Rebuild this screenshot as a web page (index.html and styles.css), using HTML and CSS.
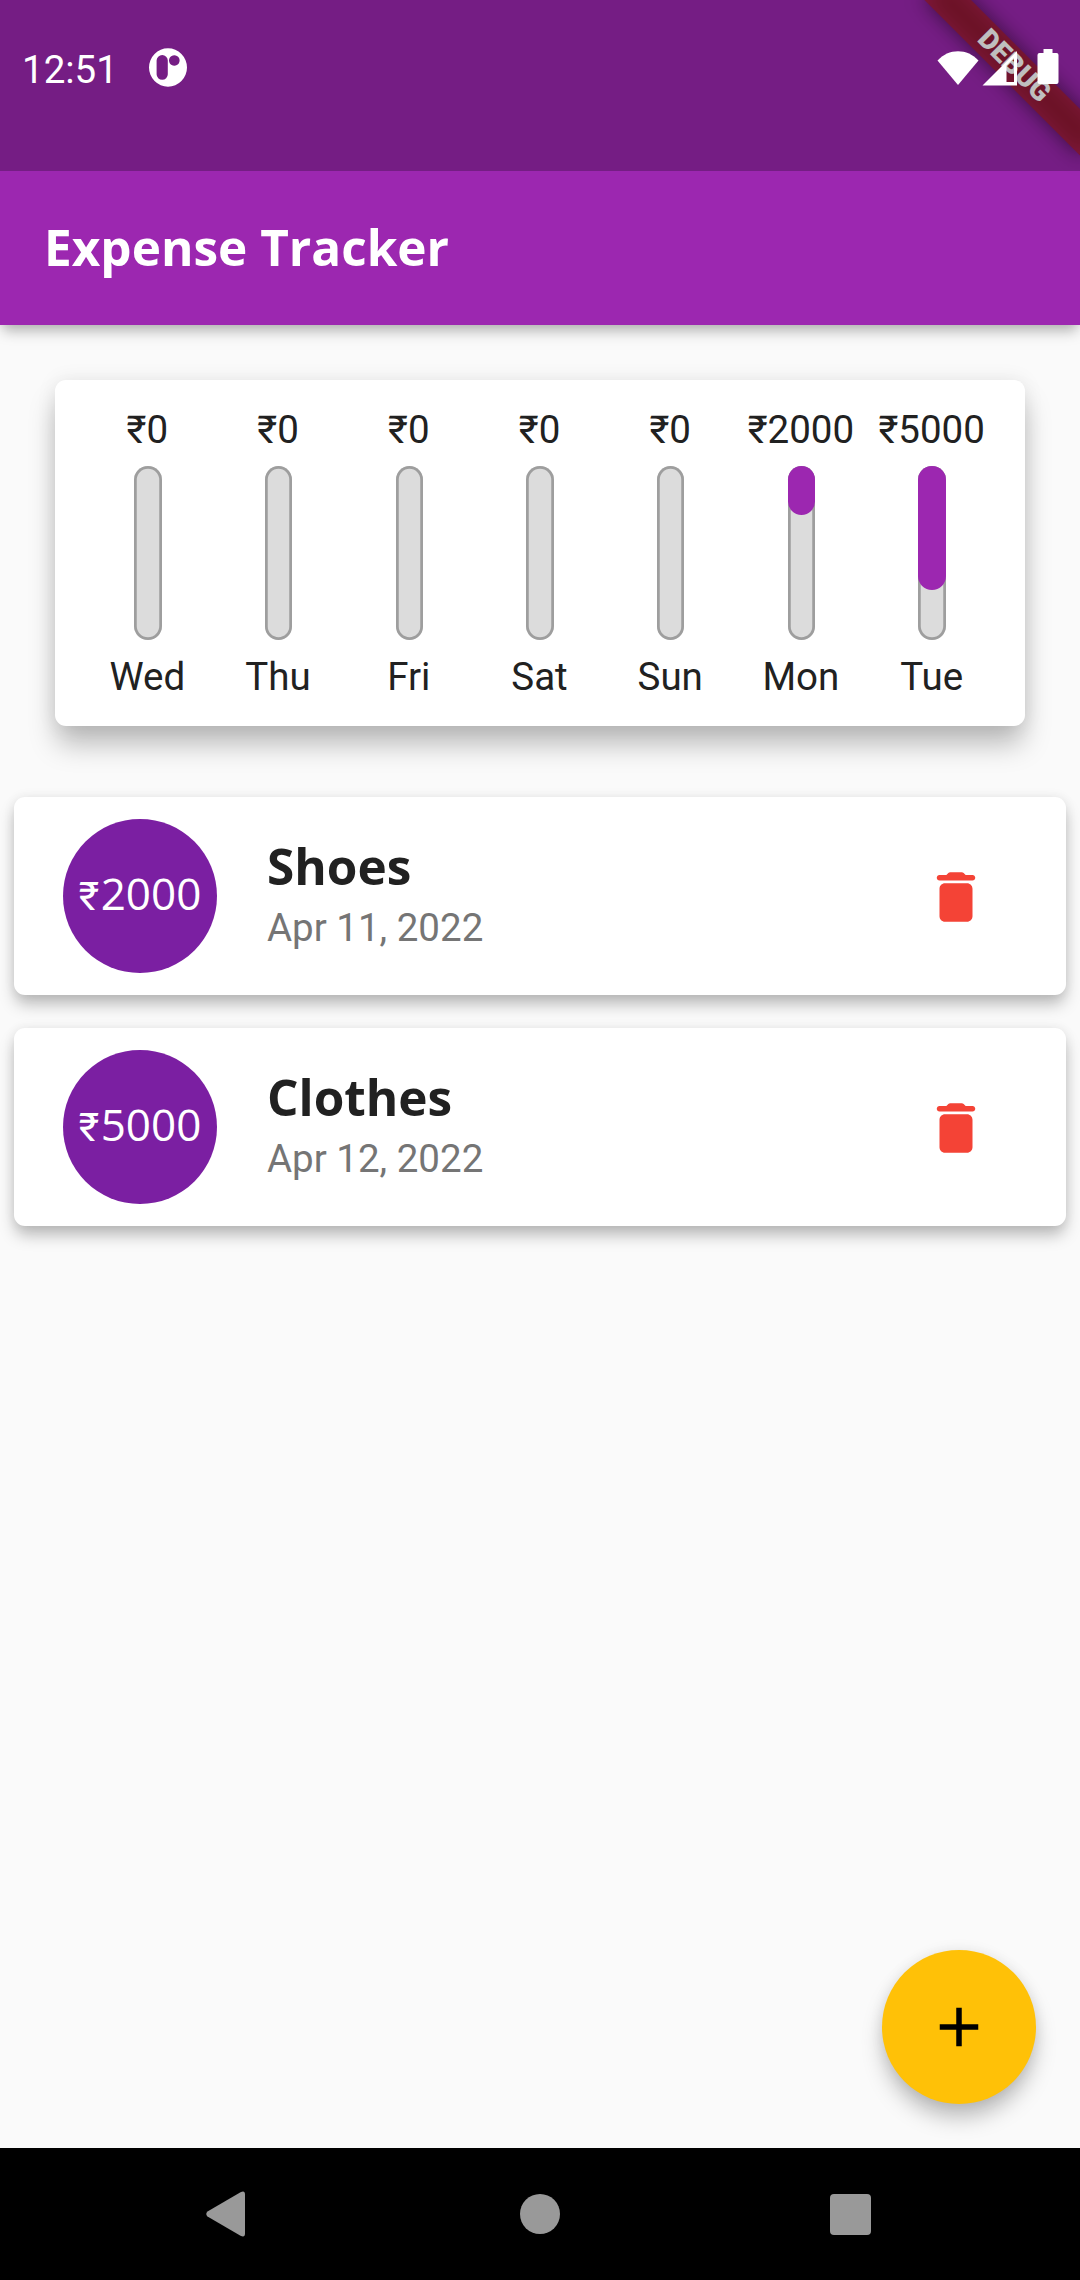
FILE: index.html
```html
<!DOCTYPE html>
<html lang="en">
<head>
<meta charset="utf-8">
<title>Expense Tracker</title>
<link rel="stylesheet" href="styles.css">
</head>
<body>
<div class="app">
  <div class="banner-clip"><div class="banner">DEBUG</div></div>
  <header class="status">
    <div class="status-left">
      <span class="clock">12:51</span>
      <svg class="notif" width="38" height="39" viewBox="0 0 38 39"><path fill="#fff" fill-rule="evenodd" d="M19 .3a19 19.200 0 1 1 0 38.400a19 19.200 0 0 1 0-38.400zM13.200 7a5.600 5.600 0 0 0-5.600 5.600v13.600a5.600 5.600 0 0 0 11.200 0v-13.600a5.600 5.600 0 0 0-5.600-5.600zM25.300 7.200a5.300 5.300 0 1 0 .01 0z"/></svg>
    </div>
    <div class="status-right">
      <svg width="42" height="36" viewBox="0 0 42 36"><path fill="#fff" d="M.5 10.500C11.500-2 30.500-2 41.500 10.500L21 35z"/></svg>
      <svg class="signal" width="36" height="36" viewBox="0 0 36 36"><path fill="#fff" fill-rule="evenodd" d="M.5 35.500L35 1v34.500zM24.500 15.500v16.500h7.500v-24z"/></svg>
      <svg class="battery" width="22" height="36" viewBox="0 0 22 36"><path fill="#fff" d="M6.500 0h9v4h4a2 2 0 0 1 2 2v27a2 2 0 0 1-2 2h-17a2 2 0 0 1-2-2v-27a2 2 0 0 1 2-2h4z"/></svg>
    </div>
  </header>
  <div class="appbar"><h1>Expense Tracker</h1></div>
  <main>
    <section class="chart">
      <div class="day"><span>₹0</span><div class="bar"></div><span>Wed</span></div>
      <div class="day"><span>₹0</span><div class="bar"></div><span>Thu</span></div>
      <div class="day"><span>₹0</span><div class="bar"></div><span>Fri</span></div>
      <div class="day"><span>₹0</span><div class="bar"></div><span>Sat</span></div>
      <div class="day"><span>₹0</span><div class="bar"></div><span>Sun</span></div>
      <div class="day"><span>₹2000</span><div class="bar"><div class="fill" style="height:28.571%"></div></div><span>Mon</span></div>
      <div class="day"><span>₹5000</span><div class="bar"><div class="fill" style="height:71.429%"></div></div><span>Tue</span></div>
    </section>
    <section class="list">
      <article class="item">
        <div class="amount"><span class="cur">₹</span>2000</div>
        <div class="info"><h2>Shoes</h2><p>Apr 11, 2022</p></div>
        <svg class="trash" viewBox="0 0 24 24"><path d="M6 19c0 1.100.9 2 2 2h8c1.100 0 2-.9 2-2V9c0-1.100-.9-2-2-2H8c-1.100 0-2 .9-2 2v10zM18 4h-2.500l-.71-.71c-.18-.18-.44-.29-.7-.29H9.910c-.26 0-.52.11-.7.29L8.500 4H6c-.55 0-1 .45-1 1s.45 1 1 1h12c.55 0 1-.45 1-1s-.45-1-1-1z"/></svg>
      </article>
      <article class="item">
        <div class="amount"><span class="cur">₹</span>5000</div>
        <div class="info"><h2>Clothes</h2><p>Apr 12, 2022</p></div>
        <svg class="trash" viewBox="0 0 24 24"><path d="M6 19c0 1.100.9 2 2 2h8c1.100 0 2-.9 2-2V9c0-1.100-.9-2-2-2H8c-1.100 0-2 .9-2 2v10zM18 4h-2.500l-.71-.71c-.18-.18-.44-.29-.7-.29H9.910c-.26 0-.52.11-.7.29L8.500 4H6c-.55 0-1 .45-1 1s.45 1 1 1h12c.55 0 1-.45 1-1s-.45-1-1-1z"/></svg>
      </article>
    </section>
    <button class="fab" aria-label="Add"><svg viewBox="0 0 24 24"><path d="M19 13h-6v6h-2v-6H5v-2h6V5h2v6h6z"/></svg></button>
  </main>
  <nav class="nav">
    <svg width="40" height="46" viewBox="0 0 40 46"><path d="M34.500 1.200Q39 -1 39 3.500V42.500Q39 47 34.500 44.800L1.500 25.500Q-1 23 1.500 20.500z"/></svg>
    <svg class="home" width="40" height="40" viewBox="0 0 40 40"><circle cx="20" cy="20" r="20"/></svg>
    <svg width="41" height="41" viewBox="0 0 41 41"><rect width="41" height="41" rx="4"/></svg>
  </nav>
</div>
</body>
</html>
```
FILE: styles.css
```css
* { box-sizing: border-box; margin: 0; padding: 0; }
body { background: #fafafa; font-family: Roboto, sans-serif; }
.app {
  position: relative;
  width: 1080px;
  height: 2280px;
  display: flex;
  flex-direction: column;
  overflow: hidden;
}

.status {
  position: relative;
  z-index: 4;
  flex: none;
  height: 171px;
  padding: 48px 21px 0 22px;
  display: flex;
  justify-content: space-between;
  align-items: flex-start;
  background: rgba(0, 0, 0, .25);
  color: #fff;
}
.status-left, .status-right { display: flex; align-items: flex-start; }
.clock { font-size: 38.5px; line-height: 44px; width: 127px; }
.status-right { padding-top: 2px; }
.signal { margin-left: 3px; }
.battery { margin-left: 19px; margin-top: -1px; }

/* corner ribbon, painted beneath the translucent status bar */
.banner-clip {
  position: absolute;
  z-index: 3;
  top: 0;
  right: 0;
  width: 300px;
  height: 300px;
  overflow: hidden;
}
.banner {
  position: absolute;
  left: 190px;
  top: 77px;
  width: 220px;
  height: 33px;
  transform-origin: 110px -77px;
  transform: rotate(45deg);
  color: #fff;
  font-size: 28px;
  font-weight: 900;
  line-height: 32px;
  text-align: center;
}
.banner::before, .banner::after {
  content: "";
  position: absolute;
  inset: 0;
  z-index: -1;
}
.banner::before { background: rgba(0, 0, 0, .5); filter: blur(10px); z-index: -2; }
.banner::after { background: rgba(183, 28, 28, .627); }

.appbar {
  position: relative;
  z-index: 2;
  flex: none;
  height: 325px;
  margin-top: -171px;
  padding: 171px 44px 2px;
  display: flex;
  align-items: center;
  background: #9c27b0;
  box-shadow: 0 9px 13px -3px rgba(0, 0, 0, .28), 0 0 10px rgba(0, 0, 0, .06);
}
h1, h2 {
  font-family: "Open Sans", sans-serif;
  font-weight: 700;
  font-size: 49.5px;
  line-height: 68px;
}
h1 { color: #fff; }
h2 { color: #212121; }

main { position: relative; flex: 1; padding-top: 55px; }
.chart {
  height: 346px;
  margin: 0 55px;
  padding: 27px 27.5px 20px;
  display: grid;
  grid-template-columns: repeat(7, 1fr);
  background: #fff;
  border-radius: 11px;
  box-shadow: 0 20px 28px -2px rgba(0, 0, 0, .26), 0 0 20px rgba(0, 0, 0, .08);
}
.day {
  display: flex;
  flex-direction: column;
  align-items: center;
  font-size: 38.5px;
  line-height: 45px;
  color: #212121;
  white-space: nowrap;
}
.day span { margin-left: -1px; }
.bar {
  width: 27.5px;
  height: 174.500px;
  margin: 13.500px 0 14px;
  border-radius: 14px;
  background: #dcdcdc;
  box-shadow: inset 0 0 0 2.75px #9e9e9e;
}
.fill { border-radius: 14px; background: #9c27b0; }

.list {
  display: flex;
  flex-direction: column;
  gap: 33px;
  margin: 71px 14px 0;
}
.item {
  height: 198px;
  padding: 0 78px 0 49px;
  display: flex;
  align-items: center;
  background: #fff;
  border-radius: 11px;
  box-shadow: 0 10px 16px -1px rgba(0, 0, 0, .26), 0 0 12px rgba(0, 0, 0, .07);
}
.amount {
  width: 154px;
  height: 154px;
  border-radius: 50%;
  background: #7b1fa2;
  color: #fff;
  display: flex;
  align-items: baseline;
  justify-content: center;
  font: 44px/149px "Open Sans", sans-serif;
}
.cur { width: 22px; font: 400 39.5px/149px Roboto, sans-serif; }
.info { flex: 1; padding: 0 0 4px 50px; }
.info h2 { line-height: 54px; margin-bottom: 12px; }
.info p { font-size: 38.5px; line-height: 45px; color: #757575; }
.trash { width: 66px; height: 66px; margin-top: 1px; margin-right: -1px; fill: #f44336; }

.fab {
  position: absolute;
  right: 44px;
  bottom: 44px;
  width: 154px;
  height: 154px;
  border: 0;
  border-radius: 50%;
  background: #ffc107;
  display: flex;
  align-items: center;
  justify-content: center;
  box-shadow: 0 15px 22px -2px rgba(0, 0, 0, .26), 0 0 14px rgba(0, 0, 0, .08);
}
.fab svg { width: 66px; height: 66px; }

.nav {
  flex: none;
  height: 132px;
  padding: 0 209px 0 206px;
  display: flex;
  justify-content: space-between;
  align-items: center;
  background: #000;
  fill: #999;
}
.home { margin-left: 3px; }
```
